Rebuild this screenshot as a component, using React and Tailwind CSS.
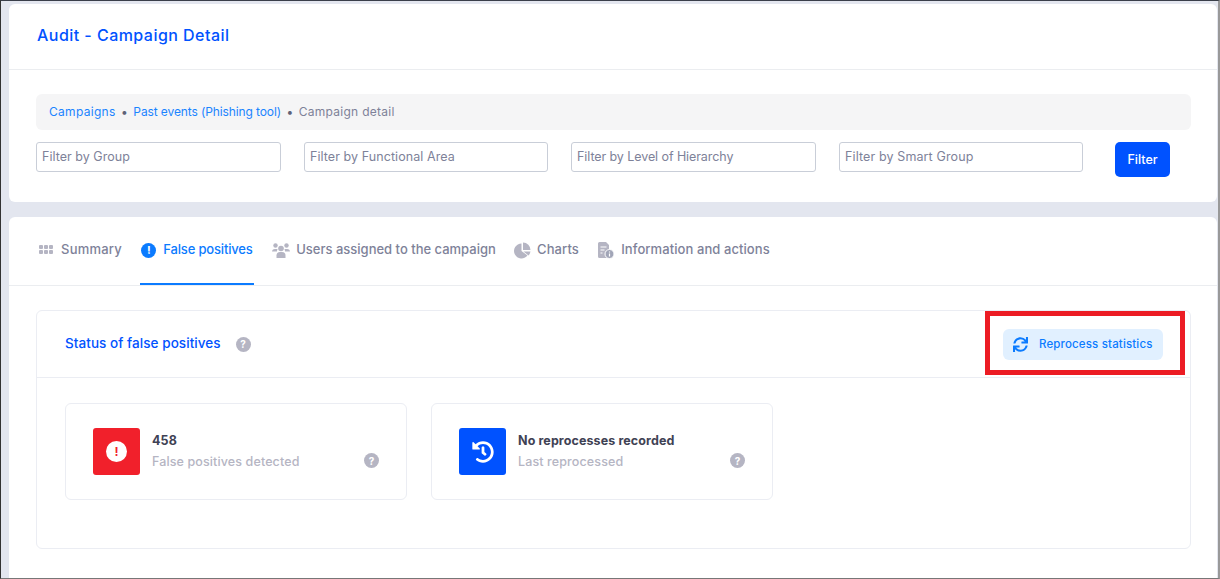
import { FaHistory, FaSync } from 'react-icons/fa';

const font = "font-['Inter','Noto_Sans',sans-serif]";

function HelpDot() {
  return (
    <span className="flex h-[15px] w-[15px] shrink-0 items-center justify-center rounded-full bg-[#b5b5c3] text-[10px] font-bold leading-none text-white">
      ?
    </span>
  );
}

function FilterInput({ label, width, tracking }) {
  return (
    <div className={`h-[30px] ${width} ${tracking} rounded-[3px] border border-[#c9ced8] bg-white pl-[5px] pt-[5px] text-[12.5px] leading-[17px] text-[#7e8299]`}>
      {label}
    </div>
  );
}

function SummaryIcon() {
  return (
    <svg width="14" height="10" viewBox="0 0 14 10" className="fill-[#b5b5c3]">
      <rect x="0" y="0" width="4" height="4" rx="1" />
      <rect x="5" y="0" width="4" height="4" rx="1" />
      <rect x="10" y="0" width="4" height="4" rx="1" />
      <rect x="0" y="5" width="4" height="4" rx="1" />
      <rect x="5" y="5" width="4" height="4" rx="1" />
      <rect x="10" y="5" width="4" height="4" rx="1" />
    </svg>
  );
}

function AlertIcon() {
  return (
    <span className="flex h-[15px] w-[15px] shrink-0 items-center justify-center rounded-full bg-[#0b7bff] text-[11px] font-bold leading-none text-white">
      !
    </span>
  );
}

function UsersIcon() {
  return (
    <svg width="18" height="15" viewBox="0 0 18 15" className="shrink-0 fill-[#b5b5c3]">
      <circle cx="3.5" cy="2.5" r="2.2" />
      <circle cx="14.5" cy="2.5" r="2.2" />
      <path d="M0 9a3 3 0 0 1 3-3h2a3 3 0 0 1 .6.1A4 4 0 0 0 5 8.5H0z" />
      <path d="M18 9a3 3 0 0 0-3-3h-2a3 3 0 0 0-.6.1A4 4 0 0 1 13 8.5h5z" />
      <circle cx="9" cy="5.5" r="2.8" />
      <path d="M4.5 15v-2.5A3.5 3.5 0 0 1 8 9h2a3.5 3.5 0 0 1 3.5 3.5V15z" />
    </svg>
  );
}

function PieIcon() {
  return (
    <svg width="17" height="17" viewBox="0 0 17 17" className="shrink-0 fill-[#b5b5c3]">
      <path d="M7.5 1.5a7.5 7.5 0 1 0 6 12L7.5 9z" />
      <path d="M9 0.5a7.5 7.5 0 0 1 7.5 7.5H9z" />
      <path d="M9.5 9.5h7a7.5 7.5 0 0 1-2 4z" />
    </svg>
  );
}

function InfoDocIcon() {
  return (
    <svg width="17" height="17" viewBox="0 0 17 17" className="shrink-0">
      <path d="M1 1.5A1.5 1.5 0 0 1 2.5 0H9l3 3v13H2.5A1.5 1.5 0 0 1 1 14.5z" fill="#b5b5c3" />
      <path d="M3.5 5h6M3.5 8h4M3.5 11h2" stroke="#fff" strokeWidth="1" />
      <circle cx="12.5" cy="12" r="4.5" fill="#a1a5b7" stroke="#fff" strokeWidth="1" />
      <path d="M12.5 11.5v3M12.5 9.5v1" stroke="#fff" strokeWidth="1.2" />
    </svg>
  );
}

function Tab({ icon, label, active, gap, width, tracking }) {
  return (
    <div className={`flex h-[68px] ${width} ${tracking} items-center justify-center ${gap} whitespace-nowrap border-b-2 text-[13px] font-medium ${active ? 'border-[#0b7bff] text-[#0b7bff]' : 'border-transparent text-[#7e8299]'}`}>
      {icon}
      <span>{label}</span>
    </div>
  );
}

function StatCard({ icon, color, title, subtitle }) {
  return (
    <div className="flex h-[97px] w-[342px] items-center rounded-md border border-[#ebedf3] pl-[27px] pr-[27px]">
      <div className={`flex h-[47px] w-[47px] shrink-0 items-center justify-center rounded-[3px] ${color}`}>{icon}</div>
      <div className="ml-[12px] flex-1 pb-[2px]">
        <div className="text-[12.5px] font-bold leading-[19px] tracking-[0.1px] text-[#3f4254]">{title}</div>
        <div className="mt-[2px] text-[12.5px] font-medium leading-[19px] tracking-[0.12px] text-[#b5b5c3]">{subtitle}</div>
      </div>
      <div className="mt-[18px]">
        <HelpDot />
      </div>
    </div>
  );
}

export default function App() {
  return (
    <div className={`${font} relative h-[579px] w-[1220px] overflow-hidden border-t border-b border-l border-r-2 border-t-[#3a3f4a] border-b-[#777] border-l-[#333] border-r-[#999] bg-[#e3e6ef]`}>
      <div className="ml-[8px] mr-[1px] flex flex-col gap-[15px] pt-[3px]">
        <section className="h-[198px] rounded-md bg-white">
          <div className="h-[66px] border-b border-[#ebedf0] pl-[28px] pt-[20px] text-[16px] font-medium leading-[22px] tracking-[0.46px] text-[#0052ff]">
            Audit - Campaign Detail
          </div>
          <div className="pl-[27px] pr-[26px] pt-[24px]">
            <div className="flex h-[36px] items-center gap-[5.5px] rounded-md bg-[#f5f5f6] pl-[13px] text-[12px]">
              <span className="tracking-[0.3px] text-[#1b84ff]">Campaigns</span>
              <span className="text-[#5e6278]">•</span>
              <span className="tracking-[-0.11px] text-[#1b84ff]">Past events (Phishing tool)</span>
              <span className="text-[#5e6278]">•</span>
              <span className="tracking-[0.27px] text-[#7e8299]">Campaign detail</span>
            </div>
            <div className="mt-[12px] flex items-start">
              <FilterInput label="Filter by Group" width="w-[245px]" tracking="tracking-[0.03px]" />
              <div className="w-[23px]" />
              <FilterInput label="Filter by Functional Area" width="w-[244px]" tracking="tracking-[0.07px]" />
              <div className="w-[23px]" />
              <FilterInput label="Filter by Level of Hierarchy" width="w-[245px]" tracking="tracking-[-0.08px]" />
              <div className="w-[23px]" />
              <FilterInput label="Filter by Smart Group" width="w-[244px]" tracking="tracking-[0.12px]" />
              <button className="ml-[32px] h-[35px] w-[55px] rounded-[5px] bg-[#0052ff] pt-[2px] text-[12.5px] font-medium text-white">
                Filter
              </button>
            </div>
          </div>
        </section>

        <section className="h-[400px] rounded-md bg-white">
          <div className="flex h-[69px] gap-[18px] border-b border-[#ebedf0] pl-[30px]">
            <Tab icon={<SummaryIcon />} label="Summary" gap="gap-[8px]" width="w-[83px]" tracking="tracking-[0.2px]" />
            <Tab icon={<AlertIcon />} label="False positives" gap="gap-[7px]" width="w-[114px]" tracking="tracking-[-0.17px]" active />
            <Tab icon={<UsersIcon />} label="Users assigned to the campaign" gap="gap-[6px]" width="w-[224px]" tracking="tracking-normal" />
            <Tab icon={<PieIcon />} label="Charts" gap="gap-[6px]" width="w-[65px]" tracking="tracking-[0.1px]" />
            <Tab icon={<InfoDocIcon />} label="Information and actions" gap="gap-[7px]" width="w-[173px]" tracking="tracking-[0.08px]" />
          </div>

          <div className="ml-[27px] mr-[26px] mt-[24px] h-[239px] rounded-md border border-[#ebedf3]">
            <div className="flex h-[67px] items-center border-b border-[#ebedf3] pl-[28px] pr-[27px]">
              <span className="pb-[2px] text-[13.5px] font-medium tracking-[0.06px] text-[#0052ff]">Status of false positives</span>
              <span className="ml-[15px]">
                <HelpDot />
              </span>
              <button className="ml-auto flex h-[31px] w-[160px] items-center rounded-md bg-[#e1f0ff] pl-[10px] text-[11.5px] font-medium tracking-[0.15px] text-[#0b7bff]">
                <FaSync className="mr-[11px] text-[15px]" />
                <span className="pt-[1px]">Reprocess statistics</span>
              </button>
            </div>
            <div className="flex gap-[24px] pl-[28px] pt-[25px]">
              <StatCard
                color="bg-[#f1202b]"
                title="458"
                subtitle="False positives detected"
                icon={
                  <span className="flex h-[21px] w-[21px] items-center justify-center rounded-full bg-white text-[12px] font-bold leading-none text-[#f1202b]">!</span>
                }
              />
              <StatCard
                color="bg-[#0052ff]"
                title="No reprocesses recorded"
                subtitle="Last reprocessed"
                icon={<FaHistory className="text-[22px] text-white" />}
              />
            </div>
          </div>
        </section>
      </div>

      {/* highlight drawn over the screenshot */}
      <div className="absolute left-[984px] top-[310px] h-[64px] w-[200px] border-[5px] border-[#ec1c24]" />
    </div>
  );
}
